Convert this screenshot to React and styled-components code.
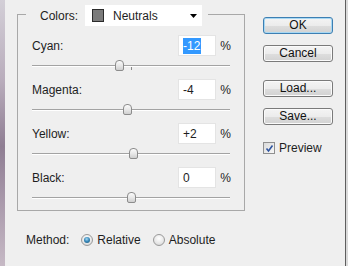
import React from 'react'
import styled, { createGlobalStyle } from 'styled-components'

const GlobalStyle = createGlobalStyle`
  html, body {
    margin: 0;
    padding: 0;
    background: #efefef;
  }
  body {
    font-family: "Liberation Sans", Arial, sans-serif;
    font-size: 12px;
    color: #1e1e1e;
  }
`

const Screen = styled.div`
  width: 348px;
  height: 266px;
  display: flex;
  overflow: hidden;
`

const Backdrop = styled.div`
  width: 5px;
  flex: none;
  background: linear-gradient(180deg, #d3cfd7 0%, #b9adbc 30%, #8f7e93 55%, #a898aa 75%, #c6b9c5 100%);
`

const Dialog = styled.div`
  width: 341px;
  box-sizing: border-box;
  flex: none;
  display: flex;
  align-items: flex-start;
  gap: 18px;
  padding: 2px 12px 0 12px;
  background: #efefef;
  border-right: 1px solid #5e5e5e;
`

const Edge = styled.div`
  width: 2px;
  flex: none;
  background: #dadada;
`

const Main = styled.div`
  width: 228px;
  display: flex;
  flex-direction: column;
`

const Group = styled.fieldset`
  margin: 0;
  min-width: 0;
  padding: 9px 13px 11px 14px;
  border: 1px solid #a8a8a8;
  display: flex;
  flex-direction: column;
  gap: 12px;
`

const Legend = styled.legend`
  margin-left: -6px;
  padding: 3px 6px 0 14px;
  display: flex;
  align-items: center;
  gap: 7px;
`

const Select = styled.div`
  width: 117px;
  height: 21px;
  box-sizing: border-box;
  background: #fff;
  display: flex;
  align-items: center;
  padding: 0 5px 0 7px;
`

const Swatch = styled.span`
  width: 12px;
  height: 13px;
  box-sizing: border-box;
  border: 1px solid #2b2b2b;
  background: #7b7b7b;
  margin-right: 9px;
`

const SelectText = styled.span`
  flex: 1;
`

const Row = styled.div`
  display: flex;
  flex-direction: column;
`

const RowHead = styled.div`
  display: flex;
  align-items: center;
  height: 21px;
`

const Label = styled.span`
  flex: 1;
`

const Field = styled.div`
  width: 38px;
  height: 21px;
  box-sizing: border-box;
  background: #fff;
  border: 1px solid #e4e4e4;
  padding-left: 4px;
  display: flex;
  align-items: center;
`

const Selected = styled.span`
  background: ${p => (p.$active ? '#3399ff' : 'transparent')};
  color: ${p => (p.$active ? '#fff' : '#1e1e1e')};
  line-height: 16px;
  padding-right: 1px;
`

const Unit = styled.span`
  width: 15px;
  text-align: right;
`

const Track = styled.div`
  position: relative;
  margin: 9px 1px 0 0;
  height: 2px;
  box-sizing: border-box;
  border-top: 1px solid #a3a3a3;
  border-bottom: 1px solid #ffffff;
`

const Tick = styled.span`
  position: absolute;
  left: 99px;
  top: 1px;
  width: 1px;
  height: 3px;
  background: #8a8a8a;
`

const Thumb = styled.span`
  position: absolute;
  top: -6px;
  width: 9px;
  height: 11px;
  box-sizing: border-box;
  border: 1px solid #8c8c8c;
  border-radius: 4px 4px 2px 2px;
  background: linear-gradient(180deg, #fbfbfb 0%, #e6e6e6 55%, #cfcfcf 100%);
`

const MethodRow = styled.div`
  display: flex;
  align-items: center;
  height: 16px;
  margin: 21px 0 0 9px;
`

const Radio = styled.span`
  position: relative;
  width: 12px;
  height: 12px;
  box-sizing: border-box;
  border-radius: 50%;
  border: 1px solid #9a9a9a;
  background: radial-gradient(circle at 50% 35%, #ffffff 0%, #e6e6e6 60%, #cdcdcd 100%);
  margin: 0 4px 0 ${p => p.$offset}px;

  &::after {
    content: '';
    display: ${p => (p.$on ? 'block' : 'none')};
    position: absolute;
    left: 2px;
    top: 2px;
    width: 6px;
    height: 6px;
    border-radius: 50%;
    background: radial-gradient(circle at 45% 35%, #a9dcf3 0%, #3b8bbd 45%, #14506f 100%);
  }
`

const Side = styled.div`
  width: 70px;
  display: flex;
  flex-direction: column;
  padding-top: 15px;
`

const Button = styled.button`
  width: 70px;
  height: 17px;
  box-sizing: border-box;
  margin: ${p => p.$gap}px 0 0 0;
  padding: 0;
  font: inherit;
  line-height: 15px;
  color: #111;
  border-radius: 3px;
  border: 1px solid ${p => (p.$primary ? '#3d7fb3' : '#7a7a7a')};
  box-shadow: ${p => (p.$primary ? 'inset 0 0 0 1px #a8d8f3' : 'inset 0 0 0 1px #fbfbfb')};
  background: linear-gradient(180deg, #f4f4f4 0%, #ececec 50%, #dedede 51%, #d2d2d2 100%);
`

const CheckRow = styled.label`
  display: flex;
  align-items: center;
  gap: 4px;
  margin-top: 16px;
`

const CheckBox = styled.span`
  width: 12px;
  height: 12px;
  box-sizing: border-box;
  border: 1px solid #8f8f8f;
  background: linear-gradient(135deg, #d9d9d9 0%, #f7f7f7 100%);
  display: flex;
  align-items: center;
  justify-content: center;
`

const channels = [
    { name: 'Cyan:', value: -12, active: true },
    { name: 'Magenta:', value: -4 },
    { name: 'Yellow:', value: 2 },
    { name: 'Black:', value: 0 },
]

const format = v => (v > 0 ? `+${v}` : `${v}`)

function Slider({ value, tick }) {
    return (
        <Track>
            {tick && <Tick />}
            <Thumb style={{ left: `${95 + value}px` }} />
        </Track>
    )
}

export default function App() {
    return (
        <Screen>
            <GlobalStyle />
            <Backdrop />
            <Dialog>
                <Main>
                    <Group>
                        <Legend>
                            <span>Colors:</span>
                            <Select>
                                <Swatch />
                                <SelectText>Neutrals</SelectText>
                                <svg width="7" height="4" viewBox="0 0 7 4">
                                    <polygon points="0,0 7,0 3.5,4" fill="#000" />
                                </svg>
                            </Select>
                        </Legend>
                        {channels.map(c => (
                            <Row key={c.name}>
                                <RowHead>
                                    <Label>{c.name}</Label>
                                    <Field>
                                        <Selected $active={c.active}>{format(c.value)}</Selected>
                                    </Field>
                                    <Unit>%</Unit>
                                </RowHead>
                                <Slider value={c.value} tick={c.active} />
                            </Row>
                        ))}
                    </Group>
                    <MethodRow>
                        <span>Method:</span>
                        <Radio $on $offset={12} />
                        <span>Relative</span>
                        <Radio $offset={12} />
                        <span>Absolute</span>
                    </MethodRow>
                </Main>
                <Side>
                    <Button $primary $gap={0}>OK</Button>
                    <Button $gap={11}>Cancel</Button>
                    <Button $gap={18}>Load...</Button>
                    <Button $gap={11}>Save...</Button>
                    <CheckRow>
                        <CheckBox>
                            <svg width="9" height="9" viewBox="0 0 9 9">
                                <path d="M1.5 4.5 L3.5 7 L7.5 1.5" fill="none" stroke="#2f55a0" strokeWidth="1.6" />
                            </svg>
                        </CheckBox>
                        <span>Preview</span>
                    </CheckRow>
                </Side>
            </Dialog>
            <Edge />
        </Screen>
    )
}
